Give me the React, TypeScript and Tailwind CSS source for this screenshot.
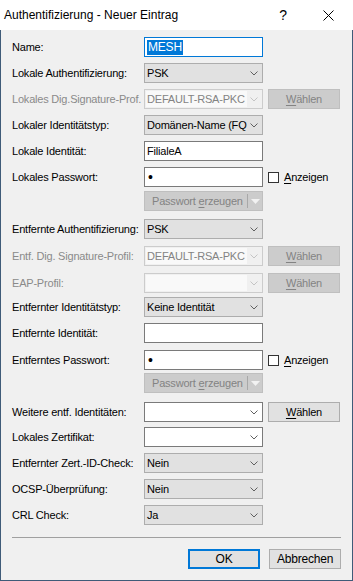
import React from "react";

const font = "font-['Liberation_Sans',Arial,sans-serif]";

function Chevron({ light }: { light?: boolean }) {
  return (
    <svg width="8" height="5" viewBox="0 0 8 5" className="shrink-0">
      <polyline
        points="0.5,0.5 4,4 7.5,0.5"
        fill="none"
        stroke={light ? "#c4c4c4" : "#606060"}
        strokeWidth="1"
      />
    </svg>
  );
}

function Label({ text, disabled }: { text: string; disabled?: boolean }) {
  return (
    <div className={`w-[132px] shrink-0 whitespace-nowrap ${disabled ? "text-[#8a8a8a]" : "text-black"}`}>
      {text}
    </div>
  );
}

function TextBox({ value, dot }: { value?: string; dot?: boolean }) {
  return (
    <div className="w-[119px] h-[20px] shrink-0 bg-white border border-[#7a7a7a] flex items-center pl-[2px] overflow-hidden">
      {dot ? <span className="text-[14px] leading-none ml-[1px]">•</span> : value}
    </div>
  );
}

// combobox: "list" = grey dropdown list, "edit" = white editable, "off" = disabled
function Combo({ value, kind }: { value?: string; kind: "list" | "edit" | "off" }) {
  const box =
    kind === "list"
      ? "bg-[#e1e1e1] border-[#adadad]"
      : kind === "edit"
      ? "bg-white border-[#7a7a7a]"
      : "bg-[#f0f0f0] border-[#cccccc]";
  return (
    <div className={`w-[119px] h-[20px] shrink-0 border flex items-center ${box}`}>
      {kind === "off" ? (
        <div className="w-[101px] h-[16px] ml-[1px] bg-[#f9f9f9] flex items-center pl-px text-[#838383] whitespace-nowrap">
          {value}
        </div>
      ) : (
        <div className="w-[102px] pl-[2px] whitespace-nowrap">{value}</div>
      )}
      <div className="flex-1 flex justify-center pr-[1px]">
        <Chevron light={kind === "off"} />
      </div>
    </div>
  );
}

function Waehlen({ disabled }: { disabled?: boolean }) {
  return (
    <div
      className={`ml-[5px] w-[72px] h-[20px] shrink-0 border flex items-center justify-center ${
        disabled ? "bg-[#cccccc] border-[#bfbfbf] text-[#838383]" : "bg-[#e1e1e1] border-[#adadad] text-black"
      }`}
    >
      <span>
        <span className="underline underline-offset-[2px]">W</span>ählen
      </span>
    </div>
  );
}

function Anzeigen() {
  return (
    <div className="ml-[5px] flex items-center gap-[5px]">
      <div className="w-[11px] h-[11px] bg-white border border-[#333333]" />
      <span>
        <span className="underline underline-offset-[2px]">A</span>nzeigen
      </span>
    </div>
  );
}

function PasswortErzeugen() {
  return (
    <div className="w-[119px] h-[20px] shrink-0 bg-[#cccccc] border border-[#bfbfbf] flex items-center text-[#838383]">
      <div className="w-[102px] pl-[7px] whitespace-nowrap">
        Passwort <span className="underline underline-offset-[2px]">e</span>rzeugen
      </div>
      <div className="w-px h-[14px] bg-[#a8a8a8]" />
      <svg width="9" height="5" viewBox="0 0 9 5" className="ml-[3px]">
        <polygon points="0,0 9,0 4.5,5" fill="#f2f2f2" />
      </svg>
    </div>
  );
}

function Row({ mt, children }: { mt: string; children: React.ReactNode }) {
  return <div className={`flex items-center h-[20px] ${mt}`}>{children}</div>;
}

export default function App() {
  return (
    <div className={`w-[353px] h-[581px] overflow-hidden flex flex-col bg-[#f0f0f0] ${font}`}>
      {/* title bar */}
      <div className="h-[30px] shrink-0 bg-white flex items-center pl-[4px] text-[12px] text-black">
        <span className="flex-1 whitespace-nowrap">Authentifizierung - Neuer Eintrag</span>
        <span className="text-[14px] mr-[36px]">?</span>
        <svg width="11" height="11" viewBox="0 0 11 11" className="mr-[19px]">
          <path d="M0.5 0.5 L10.5 10.5 M10.5 0.5 L0.5 10.5" stroke="#000" strokeWidth="1" />
        </svg>
      </div>

      <div className="flex-1 flex flex-col border-x border-b border-[#3f5b78] pl-[11px] text-[11px] tracking-[-0.2px] text-black">
        <Row mt="mt-[7px]">
          <Label text="Name:" />
          <div className="w-[119px] h-[20px] shrink-0 bg-white border border-[#0078d7] flex items-center pl-[2px]">
            <span className="bg-[#0078d7] text-white text-[12px] leading-[15px] px-px">MESH</span>
          </div>
        </Row>
        <Row mt="mt-[6px]">
          <Label text="Lokale Authentifizierung:" />
          <Combo kind="list" value="PSK" />
        </Row>
        <Row mt="mt-[6px]">
          <Label text="Lokales Dig.Signature-Prof." disabled />
          <Combo kind="off" value="DEFAULT-RSA-PKC" />
          <Waehlen disabled />
        </Row>
        <Row mt="mt-[6px]">
          <Label text="Lokaler Identitätstyp:" />
          <Combo kind="list" value="Domänen-Name (FQ" />
        </Row>
        <Row mt="mt-[6px]">
          <Label text="Lokale Identität:" />
          <TextBox value="FilialeA" />
        </Row>
        <Row mt="mt-[6px]">
          <Label text="Lokales Passwort:" />
          <TextBox dot />
          <Anzeigen />
        </Row>
        <Row mt="mt-[4px]">
          <Label text="" />
          <PasswortErzeugen />
        </Row>

        <Row mt="mt-[8px]">
          <Label text="Entfernte Authentifizierung:" />
          <Combo kind="list" value="PSK" />
        </Row>
        <Row mt="mt-[7px]">
          <Label text="Entf. Dig. Signature-Profil:" disabled />
          <Combo kind="off" value="DEFAULT-RSA-PKC" />
          <Waehlen disabled />
        </Row>
        <Row mt="mt-[7px]">
          <Label text="EAP-Profil:" disabled />
          <Combo kind="off" value="" />
          <Waehlen disabled />
        </Row>
        <Row mt="mt-[4px]">
          <Label text="Entfernter Identitätstyp:" />
          <Combo kind="list" value="Keine Identität" />
        </Row>
        <Row mt="mt-[6px]">
          <Label text="Entfernte Identität:" />
          <TextBox />
        </Row>
        <Row mt="mt-[7px]">
          <Label text="Entferntes Passwort:" />
          <TextBox dot />
          <Anzeigen />
        </Row>
        <Row mt="mt-[3px]">
          <Label text="" />
          <PasswortErzeugen />
        </Row>

        <Row mt="mt-[9px]">
          <Label text="Weitere entf. Identitäten:" />
          <Combo kind="edit" />
          <Waehlen />
        </Row>
        <Row mt="mt-[5px]">
          <Label text="Lokales Zertifikat:" />
          <Combo kind="edit" />
        </Row>
        <Row mt="mt-[6px]">
          <Label text="Entfernter Zert.-ID-Check:" />
          <Combo kind="list" value="Nein" />
        </Row>
        <Row mt="mt-[6px]">
          <Label text="OCSP-Überprüfung:" />
          <Combo kind="list" value="Nein" />
        </Row>
        <Row mt="mt-[6px]">
          <Label text="CRL Check:" />
          <Combo kind="list" value="Ja" />
        </Row>

        <div className="mt-[12px] w-[329px] h-px bg-[#a0a0a0]" />

        <div className="mt-[11px] flex justify-end w-[329px] gap-[9px]">
          <div className="w-[72px] h-[20px] bg-[#e1e1e1] border-2 border-[#0078d7] flex items-center justify-center text-[12px]">
            OK
          </div>
          <div className="w-[72px] h-[20px] bg-[#e1e1e1] border border-[#adadad] flex items-center justify-center text-[12px]">
            Abbrechen
          </div>
        </div>
      </div>
    </div>
  );
}
